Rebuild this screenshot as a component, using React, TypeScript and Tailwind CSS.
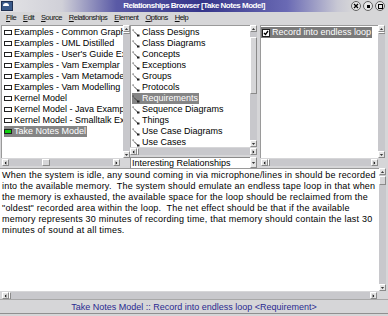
import React from "react";

const Tri = ({ dir }: { dir: "up" | "down" | "left" | "right" }) => {
  const pts: Record<string, string> = {
    up: "1,4 5,4 3,2",
    down: "1,2 5,2 3,4",
    left: "4,1 4,5 2,3",
    right: "2,1 2,5 4,3",
  };
  return (
    <svg width="6" height="6" viewBox="0 0 6 6" className="block">
      <polygon points={pts[dir]} fill="#000" />
    </svg>
  );
};

const ArrowBtn = ({ dir }: { dir: "up" | "down" | "left" | "right" }) => (
  <div className="w-[7px] h-[7px] shrink-0 flex items-center justify-center bg-[#e4e4e4] border-t border-l border-t-white border-l-white border-b border-r border-b-[#8a8a8a] border-r-[#8a8a8a] box-border">
    <Tri dir={dir} />
  </div>
);

const VScroll = ({ thumbTop, thumbH }: { thumbTop: number; thumbH: number }) => (
  <div className="w-[7px] h-full flex flex-col bg-[#c8c8cc] shrink-0">
    <ArrowBtn dir="up" />
    <div className="flex-1 relative">
      <div
        className="absolute left-0 w-[7px] bg-[#d6d6d8] border-t border-l border-white border-b border-r border-b-[#8a8a8a] border-r-[#8a8a8a] box-border"
        style={{ top: thumbTop, height: thumbH }}
      />
    </div>
    <ArrowBtn dir="down" />
  </div>
);

const HScroll = ({ thumbLeft, thumbW }: { thumbLeft: number; thumbW: number }) => (
  <div className="h-[7px] w-full flex bg-[#c8c8cc]">
    <ArrowBtn dir="left" />
    <div className="flex-1 relative">
      <div
        className="absolute top-0 h-[7px] bg-[#d6d6d8] border-t border-l border-white border-b border-r border-b-[#8a8a8a] border-r-[#8a8a8a] box-border"
        style={{ left: thumbLeft, width: thumbW }}
      />
    </div>
    <ArrowBtn dir="right" />
  </div>
);

const ModelIcon = ({ selected }: { selected?: boolean }) => (
  <div
    className={
      "w-[8px] h-[5px] border border-[#202020] shrink-0 " +
      (selected ? "bg-[#10d010]" : "bg-white")
    }
  />
);

const RelIcon = () => (
  <svg width="8" height="8" viewBox="0 0 8 8" className="shrink-0 block">
    <rect x="0.5" y="0.5" width="1.2" height="1.2" fill="#404040" />
    <line x1="2" y1="2.5" x2="6" y2="6.5" stroke="#404040" strokeWidth="1" />
    <rect x="5" y="5.5" width="2.5" height="2" fill="#202020" />
  </svg>
);

const leftItems = [
  "Examples - Common Graphics",
  "Examples - UML Distilled",
  "Examples - User's Guide Examples",
  "Examples - Vam Exemplar",
  "Examples - Vam Metamodel",
  "Examples - Vam Modelling",
  "Kernel Model",
  "Kernel Model - Java Examples",
  "Kernel Model - Smalltalk Examples",
];

const midItems = [
  "Class Designs",
  "Class Diagrams",
  "Concepts",
  "Exceptions",
  "Groups",
  "Protocols",
  "Requirements",
  "Sequence Diagrams",
  "Things",
  "Use Case Diagrams",
  "Use Cases",
];

const menu = ["File", "Edit", "Source", "Relationships", "Element", "Options", "Help"];

const lines = [
  "When the system is idle, any sound coming in via microphone/lines in should be recorded",
  "into the available memory.  The system should emulate an endless tape loop in that when",
  "the memory is exhausted, the available space for the loop should be reclaimed from the",
  "\"oldest\" recorded area within the loop.  The net effect should be that if the available",
  "memory represents 30 minutes of recording time, that memory should contain the last 30",
  "minutes of sound at all times.",
];

const TitleBtn = ({ kind }: { kind: "x" | "dot" | "sq" }) => (
  <div className="w-[10px] h-[10px] rounded-full bg-[#e8e8e8] border border-[#606060] flex items-center justify-center box-border">
    {kind === "x" && (
      <svg width="6" height="6" viewBox="0 0 6 6">
        <path d="M1 1 L5 5 M5 1 L1 5" stroke="#000" strokeWidth="1.3" />
      </svg>
    )}
    {kind === "dot" && <div className="w-[3px] h-[3px] bg-black" />}
    {kind === "sq" && <div className="w-[5px] h-[5px] border border-black" />}
  </div>
);

export default function App() {
  return (
    <div
      className="w-[388px] h-[316px] bg-[#d6d6d8] flex flex-col overflow-hidden text-black"
      style={{ fontFamily: '"Liberation Sans", Arial, sans-serif' }}
    >
      {/* Title bar */}
      <div
        className="h-[12px] shrink-0 flex items-center relative bg-[linear-gradient(to_right,#e4e4e6_0%,#d0d0d8_16%,#5a5aa6_30%,#35358a_52%,#6a6ab4_74%,#c8c8d4_87%,#d6d6d8_91%)]"
      >
        <div className="absolute left-[1px] top-[1px] w-[12px] h-[10px] bg-[#3a5a8a] border border-[#203050] overflow-hidden">
          <div className="w-[6px] h-[3px] bg-white mt-[1px] ml-[1px] rounded-t-full" />
        </div>
        <div className="flex-1 text-center text-white font-bold text-[8px] leading-[12px] tracking-[-0.5px]">
          Relationships Browser [Take Notes Model]
        </div>
        <div className="absolute right-[3px] top-[1px] flex gap-[2px]">
          <TitleBtn kind="x" />
          <TitleBtn kind="dot" />
          <TitleBtn kind="sq" />
        </div>
      </div>

      {/* Menu bar */}
      <div className="h-[12px] shrink-0 flex items-center gap-[7px] pl-[6px] text-[7.5px] tracking-[-0.5px] leading-[12px] text-[#111]">
        {menu.map((m) => (
          <span key={m}>
            <span className="underline">{m[0]}</span>
            {m.slice(1)}
          </span>
        ))}
      </div>

      {/* Panels */}
      <div className="h-[144px] shrink-0 flex pt-[1px]">
        {/* Left */}
        <div className="w-[130px] flex flex-col">
          <div className="h-[133px] flex pl-[1px]">
            <div className="flex-1 bg-white overflow-hidden pt-[1px] border-t border-l border-[#9a9a9a]">
              {leftItems.map((t) => (
                <div key={t} className="h-[11px] flex items-center gap-[2px] pl-[2px] whitespace-nowrap text-[9px] leading-[11px]">
                  <ModelIcon />
                  <span>{t}</span>
                </div>
              ))}
              <div className="h-[11px] flex items-center pl-[2px] whitespace-nowrap text-[9px] leading-[11px]">
                <div className="flex items-center gap-[2px] bg-[#858585] text-white pr-[1px] h-[11px]">
                  <ModelIcon selected />
                  <span>Take Notes Model</span>
                </div>
              </div>
            </div>
            <VScroll thumbTop={0} thumbH={0} />
          </div>
          <div className="h-[8px] pt-[1px] pl-[2px] pr-[10px]">
            <HScroll thumbLeft={33} thumbW={8} />
          </div>
        </div>

        {/* Middle */}
        <div className="w-[129px] flex flex-col">
          <div className="h-[122px] flex">
            <div className="flex-1 bg-white overflow-hidden pt-[1px] border-t border-l border-[#9a9a9a]">
              {midItems.map((t) => (
                <div key={t} className="h-[11px] flex items-center pl-[1px] whitespace-nowrap text-[9px] leading-[11px]">
                  <div
                    className={
                      "flex items-center gap-[2px] h-[11px] pr-[1px] " +
                      (t === "Requirements" ? "bg-[#858585] text-white" : "")
                    }
                  >
                    <RelIcon />
                    <span>{t}</span>
                  </div>
                </div>
              ))}
            </div>
            <div className="pr-[2px] h-full flex">
              <VScroll thumbTop={5} thumbH={57} />
            </div>
          </div>
          <div className="h-[8px] pt-[1px] pr-[2px]">
            <HScroll thumbLeft={0} thumbW={0} />
          </div>
          <div className="h-[13px] pt-[2px] flex pr-[2px]">
            <div className="flex-1 bg-white border-t border-l border-[#8a8a8a] text-[9px] leading-[10px] pl-[1px] whitespace-nowrap overflow-hidden">
              Interesting Relationships
            </div>
            <div className="w-[7px] h-[11px] flex items-center justify-center bg-[#e4e4e4] border-t border-l border-white border-b border-r border-b-[#8a8a8a] border-r-[#8a8a8a] box-border">
              <Tri dir="down" />
            </div>
          </div>
        </div>

        {/* Right */}
        <div className="w-[129px] flex flex-col">
          <div className="h-[133px] flex pl-[1px]">
            <div className="flex-1 bg-white overflow-hidden pt-[1px] border-t border-l border-[#9a9a9a]">
              <div className="h-[11px] flex items-center whitespace-nowrap text-[9px] leading-[11px]">
                <div className="flex items-center gap-[2px] bg-[#7a7a7a] text-white h-[11px] pl-[1px] pr-[1px]">
                  <div className="w-[8px] h-[8px] bg-white border border-[#202020] flex items-center justify-center box-border">
                    <svg width="6" height="6" viewBox="0 0 6 6">
                      <path d="M1 3 L2.5 4.5 L5 1" stroke="#000" strokeWidth="1.3" fill="none" />
                    </svg>
                  </div>
                  <span>Record into endless loop</span>
                </div>
              </div>
            </div>
            <div className="pr-[3px] h-full flex">
              <VScroll thumbTop={0} thumbH={0} />
            </div>
          </div>
          <div className="h-[8px] pt-[1px] pl-[2px] pr-[10px]">
            <HScroll thumbLeft={0} thumbW={0} />
          </div>
        </div>
      </div>

      {/* Text area */}
      <div className="h-[131px] shrink-0 flex flex-col">
        <div className="h-[123px] flex">
          <div className="flex-1 bg-white border-t border-[#9a9a9a] pl-[2px] pt-[1px] text-[9px] leading-[11px] tracking-[0.2px] whitespace-pre overflow-hidden">
            {lines.map((l, i) => (
              <div key={i}>{l}</div>
            ))}
          </div>
          <div className="pr-[2px] h-full flex">
            <VScroll thumbTop={1} thumbH={9} />
          </div>
        </div>
        <div className="h-[8px] pt-[1px] pl-[2px] pr-[11px]">
          <HScroll thumbLeft={0} thumbW={0} />
        </div>
      </div>

      {/* Status bar */}
      <div className="h-[14px] shrink-0 flex items-center justify-center text-[9px] leading-[14px] text-[#2a2a90] border-t border-[#a8a8a8]">
        Take Notes Model :: Record into endless loop &lt;Requirement&gt;
      </div>
      <div className="flex-1 border-t border-[#909090] bg-[#d6d6d8]" />
    </div>
  );
}
